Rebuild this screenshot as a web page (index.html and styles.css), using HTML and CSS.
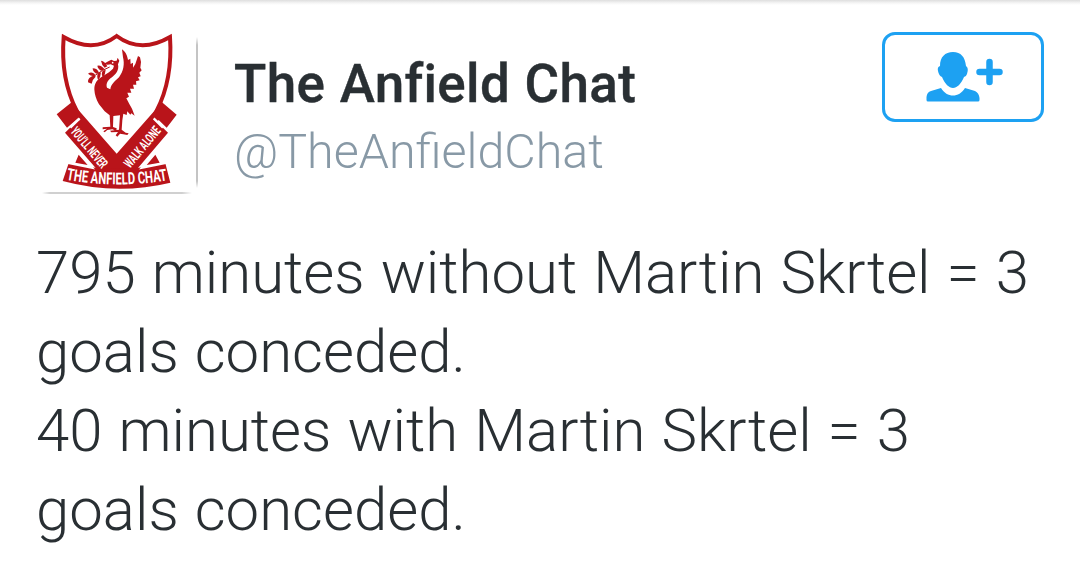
FILE: index.html
```
<!doctype html>
<html lang="en">
<head>
	<meta charset="utf-8" />
	<title>
		The Anfield Chat
	</title>

	<link rel="stylesheet" href="styles.css">
</head>
<body>

	<article class="tweet">

		<!-- BEGIN: Header. -->
		<header class="tweet__header">

			<div class="avatar">
				<svg class="avatar__crest" viewBox="36 39 468 480" role="img" aria-label="The Anfield Chat crest">
					<!-- Shield. -->
					<path d="M101 51 Q189 102 260 48 Q332 102 420 51 C426 140 412 210 380 272 C354 326 309 374 260 432 C211 374 166 326 140 272 C108 210 94 140 101 51 Z" fill="#ffffff" stroke="#b9141a" stroke-width="12" />

					<!-- Ribbons. -->
					<path d="M125 247 L260 401 L396 247 L440 284 L410 323 L386 300 L381 306 L414 338 L322 446 L310 462 H210 L199 446 L105 338 L138 306 L150 300 L144 295 L111 323 L80 283 Z" fill="#b9141a" />
					<path d="M121 323 L149 295 M371 295 L399 323" fill="none" stroke="#ffffff" stroke-width="7" />
					<path d="M146 404 L173 435 L136 428 Z M376 404 L350 435 L389 428 Z" fill="#b9141a" />
					<path d="M116 430 Q260 463 406 430 L421 488 Q260 527 98 483 Z" fill="#b9141a" />
					<path d="M114 429 L187 444 L146 396 M408 429 L335 444 L376 396" fill="none" stroke="#ffffff" stroke-width="6" />

					<!-- Liver bird. -->
					<path d="M276 88 C289 97 292 110 294 120 L301 116 L302 132 L309 128 L309 143 L316 132 L324 108 L330 112 L333 126 L331 143 L335 151 L328 158 L332 169 L324 172 L329 181 L318 184 L319 194 L309 194 L312 206 L300 206 L304 218 L292 218 L297 230 L289 235 L298 252 L306 266 L314 287 L304 280 L301 284 L292 274 L290 285 L280 281 L277 301 L275 329 L287 338 L296 340 L292 345 L280 343 L270 341 L262 350 L257 346 L264 336 L244 337 L240 332 L267 329 L270 286 L250 288 L249 321 L260 325 L259 333 L247 328 L232 330 L224 337 L220 334 L231 326 L218 328 L218 322 L241 320 L239 286 L224 274 L207 253 C198 238 194 224 193 208 C193 189 202 178 218 169 L237 157 L249 146 L252 137 L242 133 L233 134 L220 132 L235 124 L244 119 L252 123 L260 122 L263 113 L268 122 L264 133 C268 151 257 163 246 172 C233 180 227 192 231 203 L241 208 C243 192 257 182 267 172 C281 153 284 132 279 112 Z" fill="#b9141a" />
					<circle cx="248" cy="128" r="2.5" fill="#ffffff" />

					<!-- Sprig in the beak. -->
					<path d="M239 141 L218 151 L191 169" fill="none" stroke="#b9141a" stroke-width="3" />
					<path d="M232 139 Q225 124 213 122 Q215 135 224 143 Z M224 148 Q213 134 202 137 Q204 148 214 152 Z M207 158 Q202 145 188 145 Q188 155 199 161 Z M195 163 Q185 153 174 161 Q181 168 192 169 Z M194 166 Q172 172 174 187 L185 191 Q187 178 197 170 Z M204 160 Q199 171 205 180 Q212 171 213 157 Z M218 152 Q212 164 220 173 Q226 161 227 149 Z" fill="#b9141a" />

					<!-- Lettering. -->
					<text class="crest-text" transform="translate(120 335) rotate(50)" font-size="40" textLength="147" lengthAdjust="spacingAndGlyphs">YOU’LL NEVER</text>
					<text class="crest-text" transform="translate(300 446) rotate(-50)" font-size="40" textLength="147" lengthAdjust="spacingAndGlyphs">WALK ALONE</text>
					<path id="motto" d="M109 479 Q260 507 420 480" fill="none" />
					<text class="crest-text" font-size="50"><textPath href="#motto" textLength="305" lengthAdjust="spacingAndGlyphs">THE ANFIELD CHAT</textPath></text>
				</svg>
			</div>

			<div class="author">
				<h1 class="author__name">The Anfield Chat</h1>
				<div class="author__handle">@TheAnfieldChat</div>
			</div>

			<button class="follow" type="button" aria-label="Follow">
				<svg class="follow__icon" viewBox="0 0 78 52">
					<path d="M27 1 C35 1 39 6 40 15 Q43 17 41 23 Q40 26 38 26 C35 33 31 37 27 37 C23 37 19 33 16 26 Q13 25 12 20 Q11 16 14 15 C14 6 19 1 27 1 Z" />
					<path d="M15 37 C21 47 33 47 39 37 L49 40 Q53 42 53.500 47 V49 Q53.500 50.500 52 50.500 H2 Q.5 50.500 .5 49 V46 Q1 41 5 40 Z" />
					<path class="follow__plus" d="M63.500 11 V31 M53.500 21 H73.500" />
				</svg>
			</button>

		</header>
		<!-- END: Header. -->

		<p class="tweet__text">
			795 minutes without Martin Skrtel = 3 goals conceded.<br />
			40 minutes with Martin Skrtel = 3<br />
			goals conceded.
		</p>

	</article>

</body>
</html>
```
FILE: styles.css
```
html {
	box-sizing: border-box ;
}

*, *:before, *:after {
	box-sizing: inherit ;
}

body {
	background: #ffffff linear-gradient( #dedede, #f5f5f5 3px, #ffffff 5px ) no-repeat ;
	color: #292f33 ;
	font-family: Roboto, "Liberation Sans", sans-serif ;
	margin: 0px 0px 0px 0px ;
}

.tweet {
	height: 574px ;
	overflow: hidden ;
	padding: 32px 36px 0px 36px ;
}

.tweet__header {
	align-items: flex-start ;
	display: flex ;
	height: 201px ;
}

.tweet__text {
	font-size: 59.9px ;
	font-weight: 300 ;
	line-height: 79px ;
	margin: 0px -10px 0px 0px ;
	word-spacing: 1.4px ;
}

/* BEGIN: Avatar. */
/* The card edge is only drawn on the right and bottom, fading at the corners. */
.avatar {
	background:
		linear-gradient( transparent, #c4c4c4 8px, #c4c4c4 144px, transparent ) right 5px / 2px 151px no-repeat,
		linear-gradient( to right, transparent, #d0d0d0 8px, #d0d0d0 140px, transparent ) left bottom / 150px 2px no-repeat
	;
	flex: 0 0 auto ;
	height: 162px ;
	margin-left: 6px ;
	width: 156px ;
}

.avatar__crest {
	display: block ;
	height: 160px ;
	overflow: visible ;
	position: relative ;
	top: 1px ;
	width: 156px ;
}

.crest-text {
	fill: #ffffff ;
	font-family: Roboto, "Liberation Sans", sans-serif ;
	font-weight: 700 ;
}
/* END: Avatar. */

/* BEGIN: Author. */
.author {
	flex: 1 1 auto ;
	padding: 17px 0px 0px 36px ;
}

.author__name {
	-webkit-text-stroke: 0.4px #292f33 ;
	font-size: 53px ;
	font-variant-ligatures: none ;
	font-weight: 500 ;
	letter-spacing: 0.33px ;
	line-height: 70px ;
	margin: 0px 0px 0px 0px ;
	word-spacing: 1px ;
}

.author__handle {
	color: #8899a6 ;
	font-size: 48.4px ;
	font-weight: 300 ;
	line-height: 66px ;
}
/* END: Author. */

/* BEGIN: Follow button. */
.follow {
	align-items: center ;
	background-color: #ffffff ;
	border: 3px solid #1da1f2 ;
	border-radius: 13px ;
	display: flex ;
	flex: 0 0 auto ;
	height: 90px ;
	justify-content: center ;
	padding: 0px 0px 0px 4px ;
	width: 162px ;
}

.follow__icon {
	fill: #1da1f2 ;
	height: 52px ;
	width: 78px ;
}

.follow__plus {
	fill: none ;
	stroke: #1da1f2 ;
	stroke-linecap: round ;
	stroke-width: 6.5px ;
}
/* END: Follow button. */
```
